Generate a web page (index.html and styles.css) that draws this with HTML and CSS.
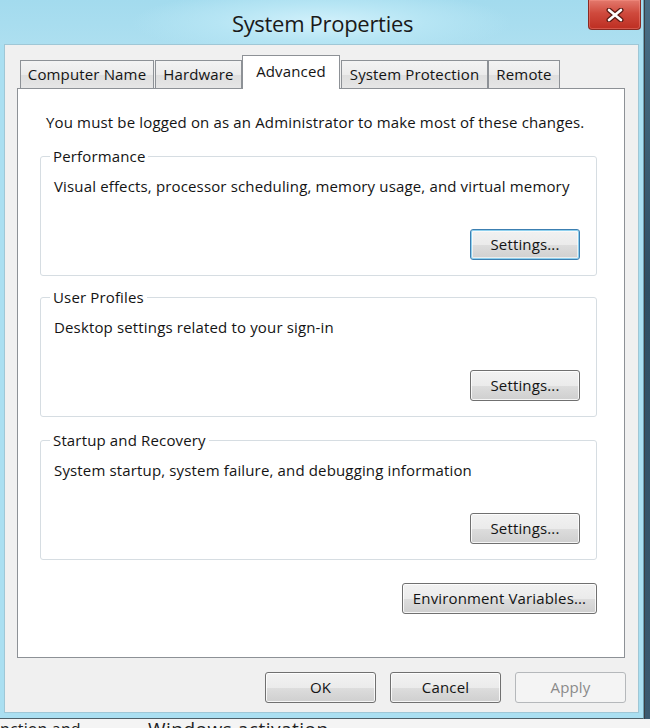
FILE: index.html
```html
<!DOCTYPE html>
<html>
<head>
<meta charset="utf-8">
<title>System Properties</title>
<link rel="stylesheet" href="styles.css">
</head>
<body>
<div class="screen">
  <div class="top">
    <div class="window">
      <div class="titlebar">
        <div class="tb-left"></div>
        <div class="title">System Properties</div>
        <div class="tb-right">
          <div class="close">
            <svg width="18" height="14" viewBox="0 0 18 14">
              <path d="M3 2 L15 12 M15 2 L3 12" stroke="#5a1a14" stroke-width="5" stroke-linecap="round"/>
              <path d="M3 2 L15 12 M15 2 L3 12" stroke="#ffffff" stroke-width="2.6" stroke-linecap="round"/>
            </svg>
          </div>
        </div>
      </div>
      <div class="client">
        <div class="tabs">
          <div class="tab t-cn">Computer Name</div>
          <div class="tab t-hw">Hardware</div>
          <div class="tab active t-adv">Advanced</div>
          <div class="tab t-sp">System Protection</div>
          <div class="tab t-rm">Remote</div>
        </div>
        <div class="panel">
          <p class="note">You must be logged on as an Administrator to make most of these changes.</p>
          <fieldset class="group g1">
            <legend>Performance</legend>
            <p class="desc">Visual effects, processor scheduling, memory usage, and virtual memory</p>
            <div class="btn-row"><button class="btn focus">Settings...</button></div>
          </fieldset>
          <fieldset class="group g2">
            <legend>User Profiles</legend>
            <p class="desc">Desktop settings related to your sign-in</p>
            <div class="btn-row"><button class="btn">Settings...</button></div>
          </fieldset>
          <fieldset class="group g3">
            <legend>Startup and Recovery</legend>
            <p class="desc">System startup, system failure, and debugging information</p>
            <div class="btn-row"><button class="btn">Settings...</button></div>
          </fieldset>
          <div class="env-row"><button class="btn env">Environment Variables...</button></div>
        </div>
        <div class="actions">
          <button class="btn act">OK</button>
          <button class="btn act">Cancel</button>
          <button class="btn act disabled">Apply</button>
        </div>
      </div>
    </div>
    <div class="edge"></div>
  </div>
  <div class="below">
    <span class="b1">nction and</span>
    <span class="b2">Windows activation</span>
  </div>
</div>
</body>
</html>
```

FILE: styles.css
```css
* { box-sizing: border-box; }

html, body {
  margin: 0;
  padding: 0;
}

body {
  width: 650px;
  height: 728px;
  overflow: hidden;
  font-family: "Open Sans", "Noto Sans", "DejaVu Sans", sans-serif;
  font-size: 15px;
  letter-spacing: 0.15px;
  color: #141414;
  background: #ffffff;
}

.screen {
  width: 650px;
  height: 728px;
  display: flex;
  flex-direction: column;
}

.top {
  display: flex;
  height: 719px;
}

.window {
  width: 644px;
  height: 719px;
  display: flex;
  flex-direction: column;
  background: #aadff1;
  border-right: 1px solid #6e9fb2;
  border-bottom: 1px solid #4e5f68;
}

.edge {
  flex: 1;
  background: linear-gradient(#4a6f86, #2f4f64 40%, #3b5a70);
  border-left: 1px solid #3a3f44;
}

.titlebar {
  height: 45px;
  display: grid;
  grid-template-columns: 1fr auto 1fr;
  align-items: center;
  background: radial-gradient(ellipse 190px 34px at 50% 50%, #d2f1fb 0%, #b6e5f4 55%, rgba(170, 223, 241, 0) 100%), linear-gradient(#a3dbee, #addff0);
}

.title {
  font-size: 22px;
  color: #1a1a1a;
  letter-spacing: -0.3px;
  padding-top: 1px;
  padding-left: 2px;
}

.tb-right {
  align-self: start;
  justify-self: end;
  padding-right: 2px;
}

.close {
  width: 53px;
  height: 30px;
  display: flex;
  align-items: center;
  justify-content: center;
  background: linear-gradient(#e3796d, #cf4a3d 45%, #bd2e22);
  border: 1px solid #8a2a22;
  border-top: none;
  border-radius: 0 0 4px 4px;
  box-shadow: inset 0 0 0 1px rgba(255, 160, 150, 0.35);
}

.client {
  flex: 1;
  margin: 0 5px 6px 5px;
  background: #f0f0f0;
  display: flex;
  flex-direction: column;
  padding: 10px 13px 9px 12px;
  box-shadow: 0 0 0 1px #9fc7d6;
}

.tabs {
  display: flex;
  align-items: flex-end;
  padding-left: 3px;
  height: 33px;
  position: relative;
  z-index: 1;
}

.tab {
  height: 28px;
  display: flex;
  align-items: center;
  justify-content: center;
  border: 1px solid #8d9196;
  border-bottom: none;
  background: linear-gradient(#f3f3f3, #ebebeb 50%, #dedede 51%, #e6e6e6);
  white-space: nowrap;
  padding-bottom: 1px;
}

.tab.active {
  height: 34px;
  margin-bottom: -1px;
  background: #ffffff;
  padding-bottom: 3px;
}

.t-cn { width: 134px; }
.t-hw { width: 87px; margin-left: 1px; }
.t-adv { width: 98px; }
.t-sp { width: 147px; margin-left: 1px; }
.t-rm { width: 72px; }

.panel {
  height: 570px;
  background: #ffffff;
  border: 1px solid #8d9196;
  padding: 23px 27px 0 22px;
  display: flex;
  flex-direction: column;
}

.note {
  margin: 0 0 0 6px;
  line-height: 20px;
}

.group {
  margin: 14px 0 0 0;
  padding: 10px 16px 15px 13px;
  border: 1px solid #d6dde2;
  border-radius: 3px;
  min-width: 0;
}

.g2 { margin-top: 11px; }
.g3 { margin-top: 13px; }

.group legend {
  padding: 0 3px;
  margin-left: -4px;
  line-height: 20px;
}

.desc {
  margin: 0;
  line-height: 20px;
  white-space: nowrap;
}

.btn-row {
  display: flex;
  justify-content: flex-end;
  margin-top: 33px;
}

.btn {
  font-family: inherit;
  font-size: 15px;
  letter-spacing: 0.15px;
  color: #141414;
  height: 31px;
  width: 110px;
  padding: 0 0 1px 0;
  border: 1px solid #707070;
  border-radius: 3px;
  background: linear-gradient(#f2f2f2, #ebebeb 50%, #dddddd 51%, #cfcfcf);
  box-shadow: inset 0 0 0 1px rgba(255, 255, 255, 0.8);
}

.btn.focus {
  border-color: #3c7fb1;
  box-shadow: inset 0 0 0 1px #8fd0ee, inset 0 0 0 2px rgba(255, 255, 255, 0.6);
}

.env-row {
  display: flex;
  justify-content: flex-end;
  margin-top: 23px;
}

.btn.env {
  width: 195px;
}

.actions {
  display: flex;
  justify-content: flex-end;
  gap: 14px;
  margin-top: 14px;
  margin-right: -1px;
}

.btn.act {
  width: 111px;
}

.btn.disabled {
  color: #8a8a8a;
  border-color: #b5b8bb;
  background: #f4f4f4;
  box-shadow: none;
}

.below {
  flex: 1;
  display: flex;
  overflow: hidden;
  background: #f4f4f4;
  color: #222222;
  font-family: "Open Sans", sans-serif;
  line-height: 18px;
}

.b1 {
  font-size: 16px;
  width: 148px;
  margin-top: 1px;
}

.b2 {
  font-size: 19px;
  margin-top: 1px;
  letter-spacing: 0.5px;
}
```
